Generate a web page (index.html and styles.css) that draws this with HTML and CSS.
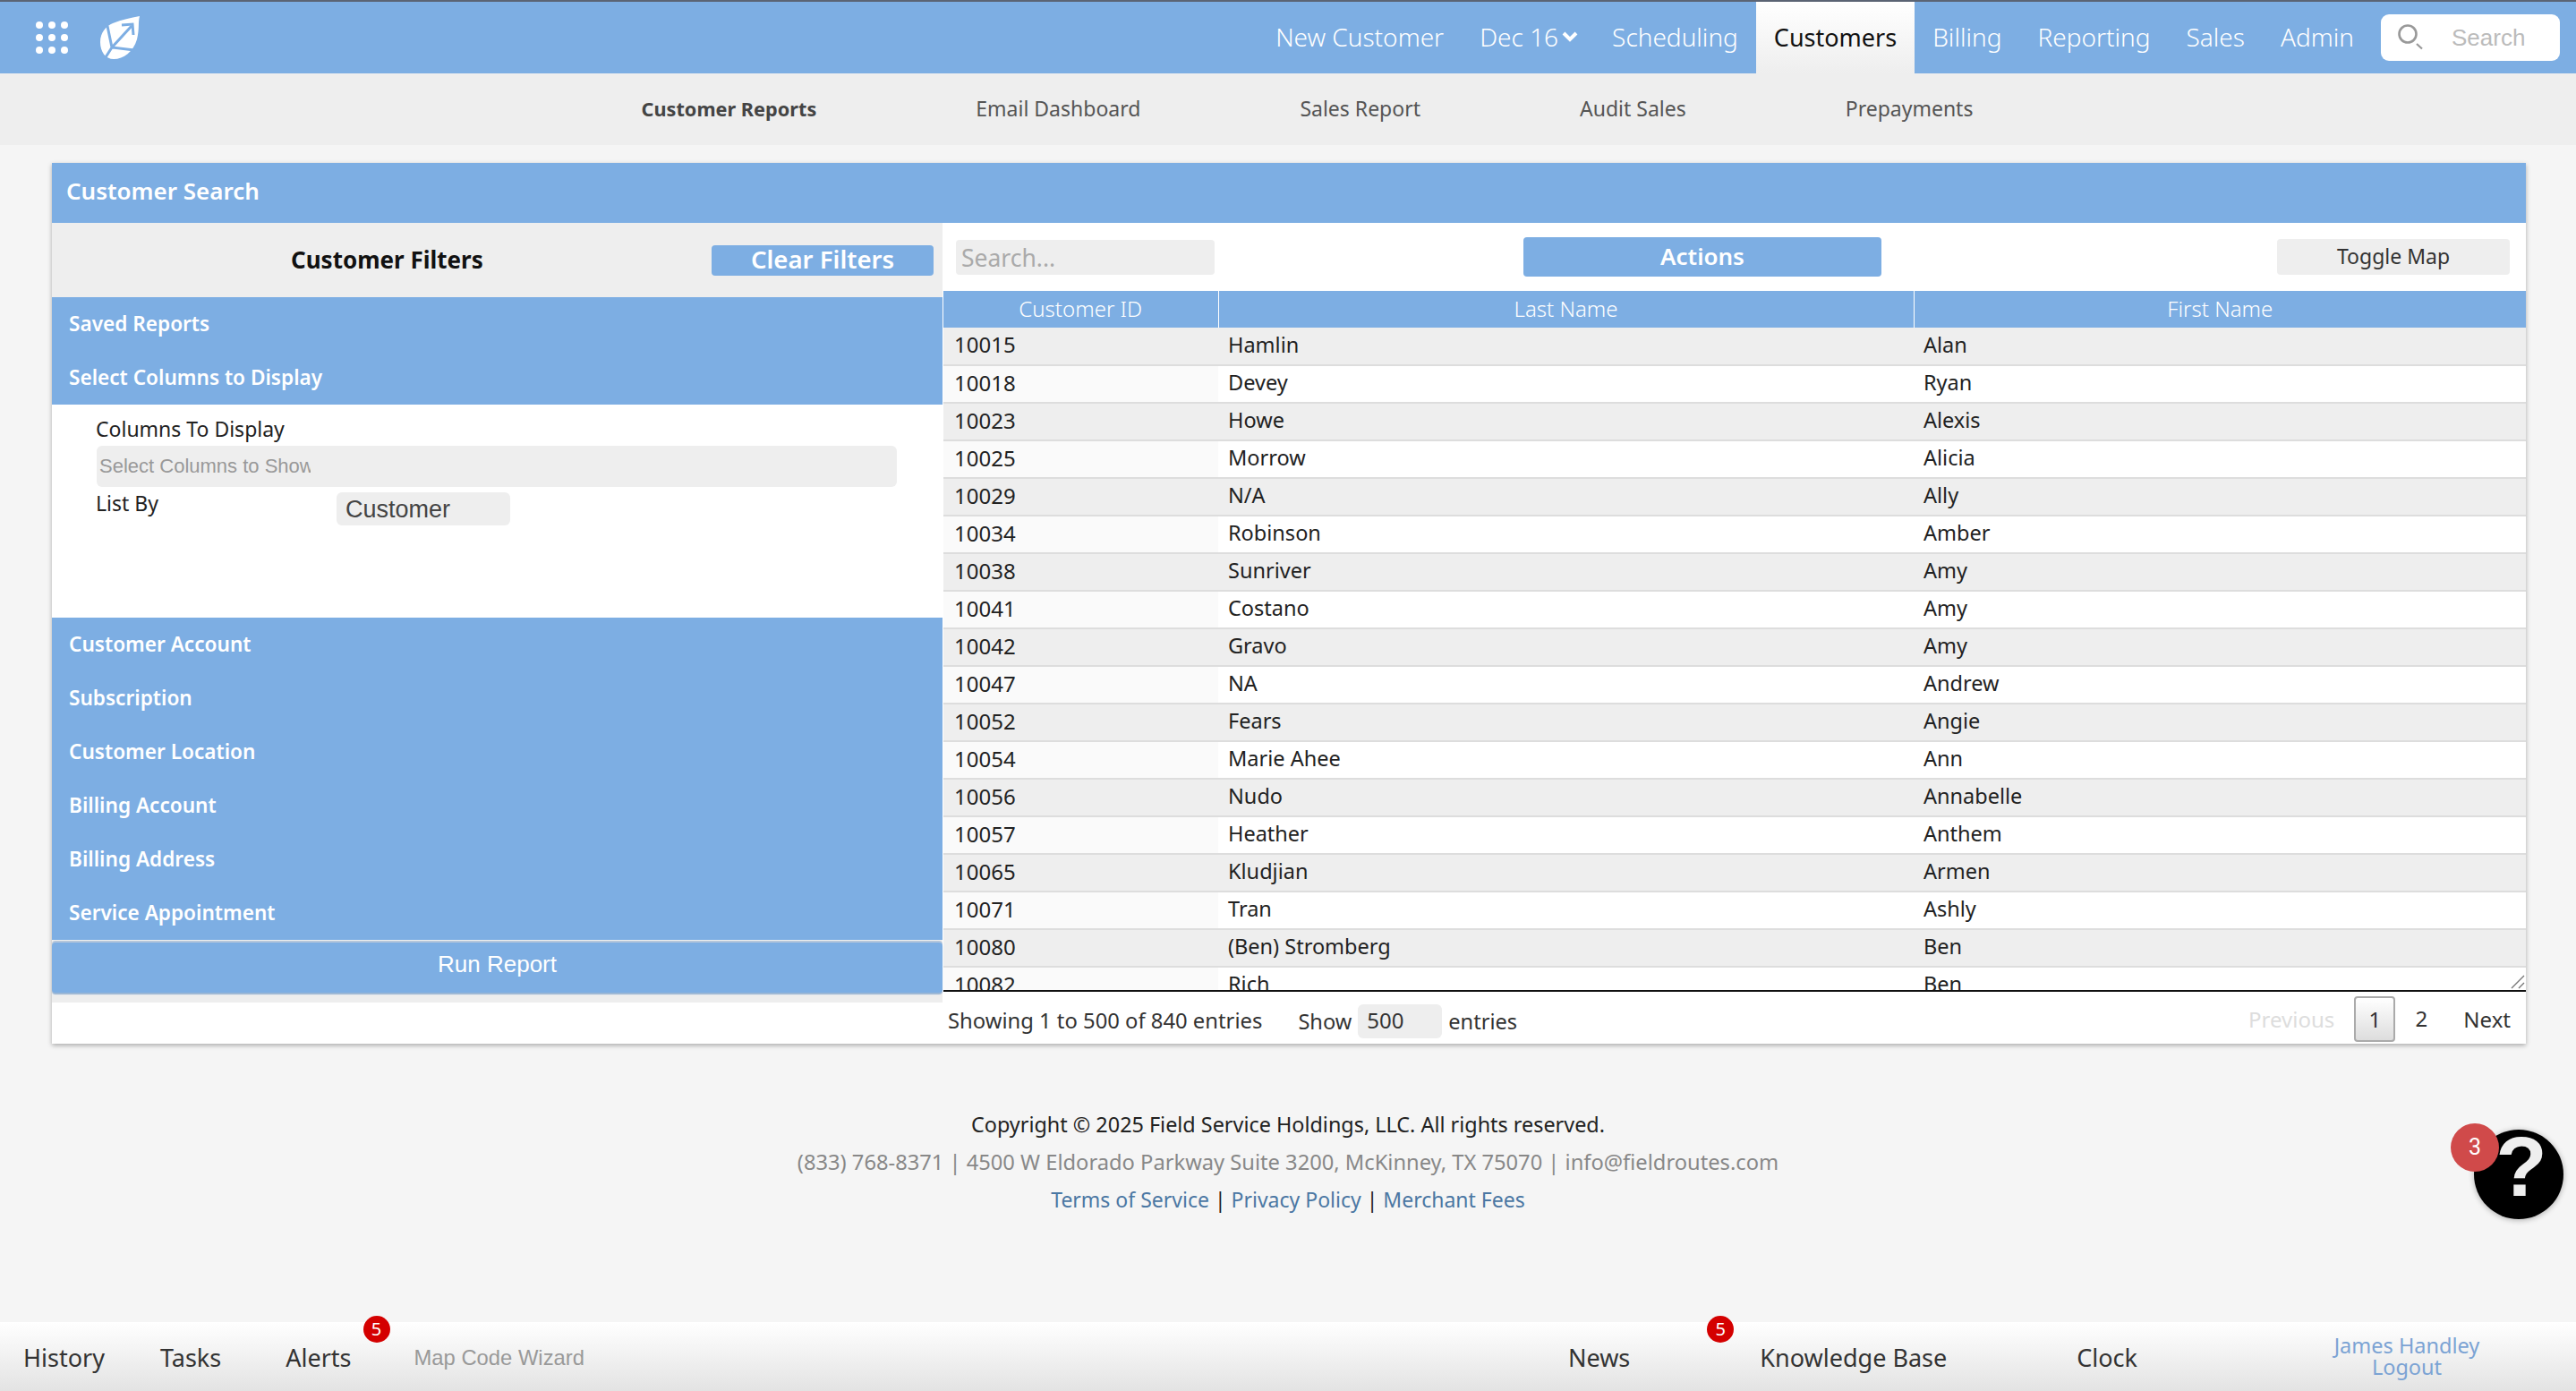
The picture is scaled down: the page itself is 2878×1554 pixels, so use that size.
FILE: index.html
```html
<!DOCTYPE html>
<html lang="en">
<head>
    <meta charset="UTF-8">
    <meta name="viewport" content="width=device-width, initial-scale=1.0">
    <title>Customer Search</title>
    <link rel="stylesheet" href="styles.css">
</head>
<body>
    <header class="topnav">
        <div class="brand">
            <svg class="apps-icon" viewBox="0 0 36 36" width="36" height="36">
                <circle cx="4" cy="4" r="4"/><circle cx="18" cy="4" r="4"/><circle cx="32" cy="4" r="4"/>
                <circle cx="4" cy="18" r="4"/><circle cx="18" cy="18" r="4"/><circle cx="32" cy="18" r="4"/>
                <circle cx="4" cy="32" r="4"/><circle cx="18" cy="32" r="4"/><circle cx="32" cy="32" r="4"/>
            </svg>
            <svg class="logo" viewBox="0 0 44 48" width="44" height="48">
                <path d="M44 0 C42 8 44 14 41 26 C37 40 26 48 15 48 C6 48 0 40 0 29 C0 18 7 11 14 8 C24 4 34 2 44 0 Z" fill="#fff"/>
                <path d="M8 11 L13 35 L38 38 M13 35 L6 46 M13 35 L35 11" fill="none" stroke="#7daee3" stroke-width="3"/>
                <path d="M24 10 L36 9 L37 21" fill="none" stroke="#7daee3" stroke-width="3"/>
            </svg>
        </div>
        <nav class="mainlinks">
            <a href="#">New Customer</a>
            <a href="#" class="date-link">Dec 16 <svg class="chevron" viewBox="0 0 18 12" width="18" height="12"><path d="M2 2 L9 9 L16 2" fill="none" stroke="#fff" stroke-width="4"/></svg></a>
            <a href="#" class="sched-link">Scheduling</a>
            <a href="#" class="active">Customers</a>
            <a href="#">Billing</a>
            <a href="#">Reporting</a>
            <a href="#">Sales</a>
            <a href="#">Admin</a>
        </nav>
        <div class="navsearch">
            <svg viewBox="0 0 32 32" width="32" height="32"><circle cx="14" cy="12" r="9.5" fill="none" stroke="#999" stroke-width="2.6"/><path d="M24 23 L30 28.5" stroke="#999" stroke-width="2.2"/></svg>
            <span>Search</span>
        </div>
    </header>

    <nav class="subnav">
        <a href="#" class="current">Customer Reports</a>
        <a href="#">Email Dashboard</a>
        <a href="#">Sales Report</a>
        <a href="#">Audit Sales</a>
        <a href="#">Prepayments</a>
    </nav>

    <main class="panel">
        <h1 class="panel-title">Customer Search</h1>
        <div class="panel-body">
            <aside class="filters">
                <div class="filters-head">
                    <h2>Customer Filters</h2>
                    <button class="clear-btn">Clear Filters</button>
                </div>
                <div class="acc">Saved Reports</div>
                <div class="acc">Select Columns to Display</div>
                <div class="acc-open">
                    <label class="field-label">Columns To Display</label>
                    <div class="col-select"><span>Select Columns to Show</span></div>
                    <div class="listby">
                        <label>List By</label>
                        <div class="listby-select">Customer</div>
                    </div>
                </div>
                <div class="acc">Customer Account</div>
                <div class="acc">Subscription</div>
                <div class="acc">Customer Location</div>
                <div class="acc">Billing Account</div>
                <div class="acc">Billing Address</div>
                <div class="acc">Service Appointment</div>
                <div class="run-wrap"><button class="run-btn">Run Report</button></div>
            </aside>
            <section class="results">
                <div class="toolbar">
                    <div class="tbl-search">Search...</div>
                    <button class="actions-btn">Actions</button>
                    <button class="toggle-btn">Toggle Map</button>
                </div>
                <div class="table-scroll">
                    <table>
                        <thead>
                            <tr><th class="c-id">Customer ID</th><th class="c-last">Last Name</th><th>First Name</th></tr>
                        </thead>
                        <tbody>
                            <tr><td>10015</td><td>Hamlin</td><td>Alan</td></tr>
                            <tr><td>10018</td><td>Devey</td><td>Ryan</td></tr>
                            <tr><td>10023</td><td>Howe</td><td>Alexis</td></tr>
                            <tr><td>10025</td><td>Morrow</td><td>Alicia</td></tr>
                            <tr><td>10029</td><td>N/A</td><td>Ally</td></tr>
                            <tr><td>10034</td><td>Robinson</td><td>Amber</td></tr>
                            <tr><td>10038</td><td>Sunriver</td><td>Amy</td></tr>
                            <tr><td>10041</td><td>Costano</td><td>Amy</td></tr>
                            <tr><td>10042</td><td>Gravo</td><td>Amy</td></tr>
                            <tr><td>10047</td><td>NA</td><td>Andrew</td></tr>
                            <tr><td>10052</td><td>Fears</td><td>Angie</td></tr>
                            <tr><td>10054</td><td>Marie Ahee</td><td>Ann</td></tr>
                            <tr><td>10056</td><td>Nudo</td><td>Annabelle</td></tr>
                            <tr><td>10057</td><td>Heather</td><td>Anthem</td></tr>
                            <tr><td>10065</td><td>Kludjian</td><td>Armen</td></tr>
                            <tr><td>10071</td><td>Tran</td><td>Ashly</td></tr>
                            <tr><td>10080</td><td>(Ben) Stromberg</td><td>Ben</td></tr>
                            <tr><td>10082</td><td>Rich</td><td>Ben</td></tr>
                        </tbody>
                    </table>
                    <svg class="resize-grip" viewBox="0 0 16 16" width="16" height="16"><path d="M1 15 L15 1 M9 15 L15 9" stroke="#777" stroke-width="1.4"/></svg>
                </div>
                <div class="tbl-footer">
                    <span class="info">Showing 1 to 500 of 840 entries</span>
                    <span class="show">Show <span class="show-input">500</span> entries</span>
                    <div class="pager">
                        <a href="#" class="off">Previous</a>
                        <a href="#" class="page on">1</a>
                        <a href="#" class="page">2</a>
                        <a href="#" class="next">Next</a>
                    </div>
                </div>
            </section>
        </div>
    </main>

    <footer class="legal">
        <p class="copy">Copyright © 2025 Field Service Holdings, LLC. All rights reserved.</p>
        <p class="addr">(833) 768-8371 | 4500 W Eldorado Parkway Suite 3200, McKinney, TX 75070 | info@fieldroutes.com</p>
        <p class="links"><a href="#">Terms of Service</a> | <a href="#">Privacy Policy</a> | <a href="#">Merchant Fees</a></p>
    </footer>

    <div class="help">
        <span class="help-q">?</span>
        <span class="help-badge">3</span>
    </div>

    <div class="bottombar">
        <a href="#" class="b-history">History</a>
        <a href="#" class="b-tasks">Tasks</a>
        <a href="#" class="b-alerts">Alerts<span class="count">5</span></a>
        <a href="#" class="b-wizard">Map Code Wizard</a>
        <a href="#" class="b-news">News<span class="count">5</span></a>
        <a href="#" class="b-kb">Knowledge Base</a>
        <a href="#" class="b-clock">Clock</a>
        <div class="b-user"><a href="#">James Handley</a><a href="#">Logout</a></div>
    </div>
</body>
</html>
```

FILE: styles.css
```css
* {
    box-sizing: border-box;
}
html, body {
    height: 100%;
}
body {
    margin: 0;
    background: #f5f5f5;
    color: #222;
    font-family: "Noto Sans", "Open Sans", sans-serif;
    font-size: 24px;
    position: relative;
    overflow: hidden;
}
a {
    color: inherit;
    text-decoration: none;
}
button {
    font-family: inherit;
    border: none;
}

/* top nav */
.topnav {
    height: 82px;
    background: #7daee3;
    border-top: 2px solid #5b6474;
    display: flex;
    align-items: center;
}
.brand {
    display: flex;
    align-items: center;
    margin-left: 40px;
    gap: 36px;
}
.apps-icon {
    fill: #fff;
}
.logo {
    display: block;
}
.mainlinks {
    margin-left: auto;
    display: flex;
    height: 80px;
}
.mainlinks a {
    display: flex;
    align-items: center;
    padding: 0 20px 2px;
    color: #fff;
    font-size: 28px;
    font-weight: 300;
}
.mainlinks .date-link {
    gap: 4px;
}
.mainlinks .sched-link {
    padding-left: 18px;
}
.mainlinks a.active {
    background: linear-gradient(#fff, #eee);
    color: #111;
    font-size: 27px;
    font-weight: 400;
}
.navsearch {
    width: 200px;
    height: 52px;
    margin: 0 18px 0 10px;
    padding-left: 16px;
    background: #fff;
    border-radius: 9px;
    display: flex;
    align-items: center;
    gap: 31px;
    color: #bbb;
    font-family: "Liberation Sans", Arial, sans-serif;
    font-size: 26px;
}
.subnav {
    height: 80px;
    background: #eee;
    display: flex;
    align-items: center;
    justify-content: center;
    gap: 178px;
    padding-left: 43px;
    padding-bottom: 2px;
    color: #555;
    font-size: 23px;
}
.subnav .current {
    font-size: 21.7px;
    font-weight: 700;
    color: #444;
}

/* panel */
.panel {
    margin: 20px 56px 0 58px;
    background: #fff;
    box-shadow: 0 2px 5px rgba(0,0,0,.3);
}
.panel-title {
    margin: 0;
    height: 67px;
    padding-left: 16px;
    background: #7daee3;
    color: #fff;
    font-size: 26px;
    font-weight: 600;
    line-height: 62px;
}
.panel-body {
    display: flex;
}
.filters {
    width: 995px;
    flex: none;
    display: flex;
    flex-direction: column;
}
.filters-head {
    height: 83px;
    background: #eee;
    display: flex;
    align-items: center;
    justify-content: space-between;
    padding-right: 10px;
}
.filters-head h2 {
    margin: 0 0 1px 267px;
    font-size: 26px;
    font-weight: 700;
    color: #111;
}
.clear-btn {
    width: 248px;
    height: 34px;
    background: #7daee3;
    color: #fff;
    border-radius: 4px;
    font-size: 27.6px;
    font-weight: 600;
    line-height: 30px;
    padding: 0 0 4px;
}
.acc {
    height: 60px;
    line-height: 60px;
    padding-left: 19px;
    background: #7daee3;
    color: #fff;
    font-size: 22.6px;
    font-weight: 600;
}
.acc-open {
    height: 238px;
    padding: 10px 51px 0 50px;
    font-size: 23px;
    color: #222;
}
.field-label {
    display: block;
    line-height: 34px;
    margin-left: -1px;
}
.col-select {
    height: 46px;
    margin-top: 2px;
    padding-left: 3px;
    background: #eee;
    border-radius: 6px;
    color: #999;
    font-family: "Liberation Sans", Arial, sans-serif;
    font-size: 22px;
    line-height: 46px;
}
.col-select span {
    display: block;
    width: 236px;
    overflow: hidden;
    white-space: nowrap;
}
.listby {
    display: flex;
}
.listby label {
    width: 268px;
    line-height: 34px;
    margin-top: 1px;
    margin-left: -1px;
    margin-right: 1px;
}
.listby-select {
    width: 194px;
    height: 37px;
    margin-top: 6px;
    padding-left: 10px;
    background: #eee;
    border-radius: 6px;
    color: #444;
    font-family: "Liberation Sans", Arial, sans-serif;
    font-size: 27px;
    line-height: 38px;
}
.run-wrap {
    height: 70px;
    background: #eee;
    padding-top: 3px;
}
.run-btn {
    display: block;
    width: 100%;
    height: 56px;
    padding: 0 0 7px;
    background: #7daee3;
    color: #fff;
    border-radius: 4px;
    box-shadow: 0 -2px 0 #b5c6da, 0 2px 1px #9ab5d4;
    font-family: "Liberation Sans", Arial, sans-serif;
    font-size: 26px;
}
.results {
    flex: 1;
    min-width: 0;
    margin-left: 1px;
}
.toolbar {
    height: 76px;
    display: flex;
    align-items: center;
    padding: 0 18px 0 14px;
}
.tbl-search {
    width: 289px;
    height: 39px;
    padding-left: 6px;
    background: #eee;
    border-radius: 4px;
    color: #aaa;
    font-size: 26.5px;
    line-height: 40px;
}
.actions-btn {
    width: 400px;
    height: 44px;
    margin-left: 345px;
    padding: 0 0 3px;
    background: #7daee3;
    color: #fff;
    border-radius: 4px;
    font-size: 26px;
    font-weight: 600;
}
.toggle-btn {
    width: 260px;
    height: 40px;
    margin-left: auto;
    padding: 0 0 3px;
    background: #eee;
    border-radius: 4px;
    color: #333;
    font-size: 23px;
}
.table-scroll {
    position: relative;
    height: 783px;
    overflow: hidden;
    border-bottom: 2px solid #111;
}
table {
    width: 100%;
    border-collapse: collapse;
    table-layout: fixed;
}
th {
    height: 41px;
    background: #7daee3;
    color: #fff;
    font-size: 24px;
    font-weight: 300;
    padding: 0 0 2px;
    border-left: 1px solid #fff;
}
th:first-child {
    border-left: none;
}
.c-id {
    width: 307px;
}
.c-last {
    width: 777px;
}
td {
    height: 42px;
    padding: 0 10px 4px 11px;
    color: #222;
    font-size: 23.5px;
    border-bottom: 2px solid #ddd;
}
td:first-child {
    padding-left: 12px;
    background: #fafafa;
    font-size: 24px;
}
tbody tr:nth-child(odd) td {
    background: #eee;
}
.resize-grip {
    position: absolute;
    right: 1px;
    bottom: 1px;
}
.tbl-footer {
    height: 58px;
    display: flex;
    align-items: center;
    padding-left: 5px;
}
.info {
    color: #333;
    padding-top: 5px;
    font-size: 23.8px;
}
.show {
    margin-left: 40px;
    display: flex;
    align-items: center;
    gap: 7px;
    color: #333;
    padding-top: 8px;
    font-size: 23.6px;
}
.show-input {
    width: 94px;
    height: 38px;
    padding-left: 10px;
    background: #eee;
    border-radius: 6px;
    font-size: 24px;
    line-height: 35px;
}
.pager {
    margin-left: auto;
    padding-right: 17px;
    display: flex;
    align-items: center;
    color: #333;
    padding-top: 2px;
}
.pager .off {
    color: #ddd;
    margin-right: 22px;
}
.page {
    width: 46px;
    height: 51px;
    line-height: 50px;
    text-align: center;
}
.page.on {
    border: 2px solid #aaa;
    border-radius: 4px;
    background: linear-gradient(#fff, #ddd);
    line-height: 47px;
    margin-right: 6px;
}
.next {
    margin-left: 24px;
}

/* legal */
.legal {
    margin-top: 69px;
    text-align: center;
    color: #222;
}
.legal p {
    margin: 0;
    line-height: 42px;
}
.copy {
    font-size: 23.4px;
}
.addr {
    color: #888;
    font-size: 23.7px;
}
.links {
    font-size: 23px;
}
.links a {
    color: #4b77a3;
}

/* help bubble */
.help {
    position: absolute;
    left: 2764px;
    top: 1262px;
    width: 100px;
    height: 100px;
    background: #000;
    border-radius: 50%;
    box-shadow: 0 1px 6px rgba(0,0,0,.3);
}
.help-q {
    position: absolute;
    left: 0;
    right: -6px;
    top: -12px;
    text-align: center;
    color: #eee;
    font-family: "Liberation Sans", Arial, sans-serif;
    font-size: 94px;
    font-weight: 700;
}
.help-badge {
    position: absolute;
    left: -26px;
    top: -7px;
    width: 54px;
    height: 54px;
    background: #d04a4a;
    border-radius: 50%;
    color: #fff;
    font-family: Roboto, sans-serif;
    font-size: 25px;
    line-height: 54px;
    text-align: center;
}

/* bottom bar */
.bottombar {
    position: absolute;
    left: 0;
    right: 0;
    bottom: 0;
    height: 77px;
    padding-top: 2px;
    background: linear-gradient(#fff, #e3e3e3);
    font-size: 27px;
    color: #333;
    display: flex;
    align-items: center;
}
.bottombar a {
    white-space: nowrap;
}
.b-history { margin-left: 26px; }
.b-tasks { margin-left: 62px; }
.b-alerts { margin-left: 72px; position: relative; }
.b-wizard {
    margin-left: 70px;
    color: #999;
    font-family: "Liberation Sans", Arial, sans-serif;
    font-size: 23.8px;
}
.b-news { margin-left: auto; position: relative; }
.b-kb { margin-left: 145px; }
.b-clock { margin-left: 145px; }
.count {
    position: absolute;
    top: -28px;
    width: 30px;
    height: 30px;
    background: #d40000;
    border-radius: 50%;
    color: #fff;
    font-size: 20px;
    line-height: 29px;
    text-align: center;
}
.b-alerts .count {
    right: -43px;
}
.b-news .count {
    right: -116px;
}
.b-user {
    width: 340px;
    margin-left: 131px;
    margin-right: 19px;
    margin-top: -4px;
    display: flex;
    flex-direction: column;
    align-items: center;
    color: #7ba3d4;
    font-size: 23.5px;
    line-height: 24px;
}
```
